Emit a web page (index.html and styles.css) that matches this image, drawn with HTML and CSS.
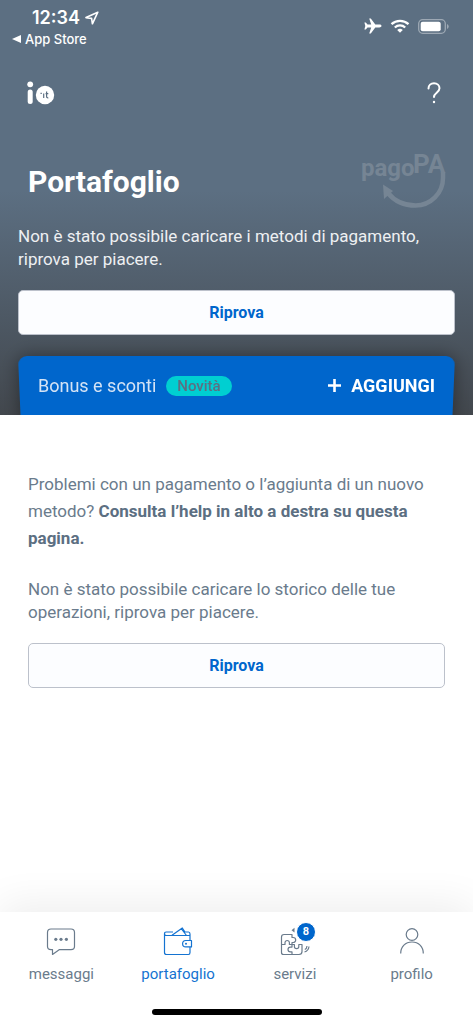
FILE: index.html
```html
<!DOCTYPE html>
<html lang="it">
<head>
<meta charset="utf-8">
<meta name="viewport" content="width=device-width, initial-scale=1">
<title>Portafoglio</title>
<link rel="stylesheet" href="styles.css">
</head>
<body>
<header class="hero">
  <div class="status">
    <div class="status-left">
      <div class="clock">12:34
        <svg width="14" height="14" viewBox="0 0 14 14" fill="none" stroke="currentColor" stroke-width="1.6" stroke-linejoin="round" aria-hidden="true"><path d="M12.8 1.2 1 6.6 6.6 7.4 7.4 12.8Z"/></svg>
      </div>
      <a class="back" href="#"><svg width="9" height="8" viewBox="0 0 9 8" fill="currentColor" aria-hidden="true"><path d="M0 4 9 0v8Z"/></svg>App Store</a>
    </div>
    <div class="status-right">
      <svg width="18" height="16" viewBox="0 0 18 16" fill="currentColor" aria-hidden="true"><path d="M17.5 8c0-.9-1-1.4-2.2-1.4h-4L6.8.6H5.2l2 6H3.5L1.8 4.4H.4L1.3 8l-.9 3.600h1.400l1.700-2.200h3.700l-2 6h1.600l4.500-6h4c1.200 0 2.200-.5 2.200-1.400Z"/></svg>
      <svg width="20" height="14" viewBox="0 0 20 14" fill="none" stroke="currentColor" stroke-width="2.300" aria-hidden="true"><path d="M1.500 5.200a12.300 12.300 0 0 1 17 0M4.800 8.500a7.600 7.600 0 0 1 10.400 0"/><path d="M10 13.800 7.200 11a4 4 0 0 1 5.600 0Z" fill="currentColor" stroke="none"/></svg>
      <svg width="31" height="15" viewBox="0 0 31 15" fill="currentColor" aria-hidden="true"><rect x=".7" y=".7" width="26.600" height="13.600" rx="4" fill="none" stroke="currentColor" stroke-width="1.300" opacity=".4"/><rect x="2.700" y="2.700" width="20" height="9.600" rx="2"/><path d="M29 5v5q1.700-.8 1.700-2.500T29 5Z" opacity=".4"/></svg>
    </div>
  </div>
  <div class="appbar">
    <svg class="logo" width="28" height="24" viewBox="0 0 28 24" role="img" aria-label="io.it"><circle cx="3.200" cy="3.300" r="2.900" fill="#fff"/><path d="M3.200 11v9.500" stroke="#fff" stroke-width="5" stroke-linecap="round"/><circle cx="18" cy="14" r="9.200" fill="#fff"/><path d="M13.500 12.400h1.300M16.700 12.500v4.500M19.600 10.600v5q0 1.400 1.700 1.200M18.600 12.700h2.700" fill="none" stroke="#5c6f82" stroke-width="1.200"/></svg>
    <button class="help" type="button" aria-label="Aiuto"><svg width="14" height="22" viewBox="0 0 14 22" fill="none" stroke="currentColor" stroke-width="2" stroke-linecap="round" aria-hidden="true"><path d="M1.500 6.500C1.500 3.300 3.800 1.300 7 1.300s5.500 2 5.500 5c0 4.200-5.500 4.700-5.500 8.700"/><path d="M7 20v.1" stroke-width="2.400"/></svg></button>
  </div>
  <div class="title-row">
    <h1>Portafoglio</h1>
    <svg class="pagopa" width="86" height="58" viewBox="0 0 86 58" role="img" aria-label="pagoPA"><text x="0" y="23">pago</text><text x="52" y="20" class="pa">PA</text><path d="M82 19v6A27.500 27.500 0 0 1 54.500 52.500Q37 52.500 27 40" fill="none" stroke="currentColor" stroke-width="4.500"/><path d="M22 31.500 32 38 23 46Z" fill="currentColor"/></svg>
  </div>
  <div class="hero-error">
    <p class="message">Non è stato possibile caricare i metodi di pagamento, riprova per piacere.</p>
    <button class="retry" type="button">Riprova</button>
  </div>
  <section class="bonus">
    <h2>Bonus e sconti</h2>
    <span class="pill">Novità</span>
    <button class="add" type="button"><svg width="13" height="13" viewBox="0 0 13 13" stroke="currentColor" stroke-width="2.600" aria-hidden="true"><path d="M6.500 0v13M0 6.500h13"/></svg>AGGIUNGI</button>
  </section>
</header>
<main class="content">
  <p class="hint">Problemi con un pagamento o l’aggiunta di un nuovo metodo? <strong>Consulta l’help in alto a destra su questa pagina.</strong></p>
  <p class="message">Non è stato possibile caricare lo storico delle tue operazioni, riprova per piacere.</p>
  <button class="retry" type="button">Riprova</button>
</main>
<nav class="tabs">
  <a href="#" class="tab"><svg width="30" height="30" viewBox="0 0 30 30" aria-hidden="true"><path d="M5 2h20q3.500 0 3.500 3.500v14Q28.500 22.600 25 22.600H13.500L6.500 27.400V22.600H5q-3.500 0-3.500-3.100v-14Q1.500 2 5 2Z"/><g fill="currentColor" stroke="none"><circle cx="9.800" cy="12.300" r="1.600"/><circle cx="15" cy="12.300" r="1.600"/><circle cx="20.400" cy="12.300" r="1.600"/></g></svg>messaggi</a>
  <a href="#" class="tab active" aria-current="page"><svg width="30" height="30" viewBox="0 0 30 30" aria-hidden="true"><path d="M27 13V8.500H3.500Q1.500 8.500 1.500 6.700V25.500q0 2 2 2h22q1.500 0 1.500-2V20M10 5H3.200Q1.500 5 1.500 6.700M9 8.300 19.300 1l2.700 4h3.500Q27 5 27 7v2M18.500 2 23.500 8.500M28.500 13.500h-5.700a3.200 3.200 0 0 0 0 6.400h5.700Z"/><circle cx="23" cy="16.700" r="1" fill="currentColor" stroke="none"/></svg>portafoglio</a>
  <a href="#" class="tab"><span class="icon-wrap"><svg width="30" height="30" viewBox="0 0 30 30" aria-hidden="true"><path d="M12 10.500V7.500H4Q1.500 7.500 1.500 10v15.500q0 2 2 2H19q3 0 3-3v-7h-3.200v2a2.200 2.200 0 1 1-4.400 0v-2H12v-2h1.200a2.500 2.500 0 1 0 0-5ZM1.500 17.500H5v-1.800a2.200 2.200 0 1 1 4.400 0v1.800H12v2.600h-1.600a2.400 2.400 0 1 0 0 4.800H12v2.600M24.800 22.500q2-.8 2.200-3.500M24.500 25q4-1.200 4.500-5.500"/><path d="M14.500 .800v4.800L11.500 3.200Z" fill="currentColor" stroke="none"/></svg><span class="badge">8</span></span>servizi</a>
  <a href="#" class="tab"><svg width="30" height="30" viewBox="0 0 30 30" aria-hidden="true"><circle cx="15" cy="7.500" r="5.800"/><path d="M3.700 26.500C3.700 19.500 8.500 15 15 15s11.300 4.500 11.300 11.500"/></svg>profilo</a>
  <div class="home-bar"></div>
</nav>
</body>
</html>
```

FILE: styles.css
```css
* { box-sizing: border-box; }
body {
  margin: 0;
  min-height: 100vh;
  display: flex;
  flex-direction: column;
  background: #fff;
  color: #5c6f82;
  font-family: Roboto, "Noto Sans", sans-serif;
  font-size: 17px;
}
h1, h2, p { margin: 0; }
button { font: inherit; cursor: pointer; }
a { color: inherit; text-decoration: none; }
svg { display: block; flex: none; }

.hero {
  overflow: hidden;
  color: #fff;
  background: linear-gradient(#5c6f82 46%, #42474d);
}
.status {
  display: flex;
  justify-content: space-between;
  padding: 7px 24px 0 12px;
  font-family: Inter, sans-serif;
}
.clock {
  display: flex;
  align-items: center;
  gap: 5px;
  padding-left: 20px;
  font-size: 18px;
  line-height: 22px;
  font-weight: 600;
}
.back {
  display: flex;
  align-items: center;
  gap: 4px;
  font-size: 13px;
  line-height: 20px;
  font-weight: 500;
}
.status-right { display: flex; align-items: center; gap: 8px; height: 38px; }
.appbar {
  display: flex;
  justify-content: space-between;
  align-items: center;
  height: 44px;
  margin-top: 22px;
  padding: 0 32px 0 27px;
}
.help { padding: 0; border: 0; background: none; color: #fff; }
.title-row {
  display: flex;
  justify-content: space-between;
  align-items: center;
  height: 58px;
  margin-top: 38px;
  padding: 0 26px 0 28px;
}
h1 { font-size: 30px; line-height: 40px; font-weight: 700; }
.pagopa { color: #768594; font: 700 24px Roboto, sans-serif; }
.pagopa text { fill: currentColor; }
.pagopa .pa { font-size: 26px; }
.hero-error { padding: 14px 18px 0; }
.message { font-size: 17px; line-height: 23px; }
.hero-error .message { color: #eef0f2; }
.content .message, .hint { color: #6a7b8c; }
.hint strong { color: #5c6f82; }
.retry {
  display: block;
  width: 100%;
  height: 45px;
  border: 1px solid #bcc1cb;
  border-radius: 5px;
  background: #fcfdff;
  color: #06c;
  font-size: 16px;
  font-weight: 700;
}
.hero-error .retry { margin-top: 19px; }
.bonus {
  position: relative;
  display: flex;
  align-items: center;
  gap: 10px;
  height: 59px;
  margin: 21px 18px 0;
  padding: 0 20px;
}
.bonus::before {
  content: "";
  position: absolute;
  inset: 0 0 -12px;
  border-radius: 9px;
  background: #06c;
  box-shadow: 0 0 18px rgba(0, 0, 0, .4);
  transform: perspective(1000px) rotateX(-11deg);
  transform-origin: top;
}
.bonus > * { position: relative; }
h2 { color: #d4e3f5; font-size: 18px; line-height: 24px; font-weight: 400; }
.pill {
  padding: 0 11px;
  border-radius: 10px;
  background: #00cfd1;
  color: #5c6f82;
  font-size: 15px;
  line-height: 20px;
  font-weight: 500;
}
.add {
  display: flex;
  align-items: center;
  gap: 10px;
  margin-left: auto;
  padding: 0;
  border: 0;
  background: none;
  color: #fff;
  font-size: 18px;
  font-weight: 700;
}
.content { flex: 1; padding: 56px 28px 0; }
.hint { font-size: 17px; line-height: 27px; }
.content .message { margin-top: 26px; }
.content .retry { margin-top: 19px; }
.tabs {
  position: relative;
  display: grid;
  grid-template-columns: repeat(4, 1fr);
  height: 112px;
  padding: 0 3px;
  background: #fff;
  box-shadow: 0 -8px 40px rgba(0, 0, 0, .07);
}
.tab {
  display: flex;
  flex-direction: column;
  align-items: center;
  gap: 6px;
  padding-top: 15px;
  color: #6a7b8c;
  font-size: 15px;
  line-height: 22px;
}
.tab svg { fill: none; stroke: currentColor; stroke-width: 1.2; stroke-linejoin: round; }
.tab.active { color: #1473d1; }
.icon-wrap { position: relative; }
.badge {
  position: absolute;
  top: -5px;
  right: -6px;
  width: 20px;
  height: 20px;
  border: 1px solid #fff;
  border-radius: 50%;
  outline: 1px solid #fff;
  background: #06c;
  color: #fff;
  font-size: 11px;
  line-height: 18px;
  font-weight: 700;
  text-align: center;
}
.home-bar {
  position: absolute;
  left: 50%;
  bottom: 9px;
  width: 170px;
  height: 6px;
  border-radius: 3px;
  background: #000;
  transform: translateX(-50%);
}
```
